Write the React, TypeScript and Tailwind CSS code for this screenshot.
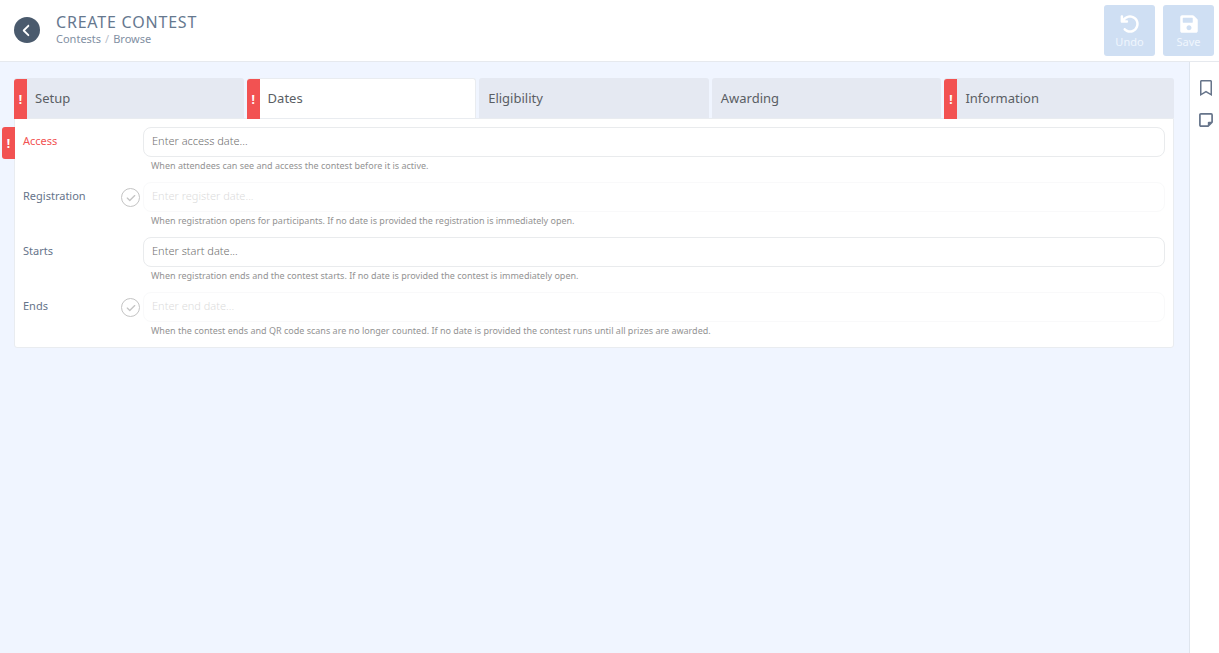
import { FaRegBookmark, FaSave } from "react-icons/fa";
import { FaAngleLeft, FaArrowRotateLeft, FaCheck } from "react-icons/fa6";

type Tab = { label: string; invalid?: boolean; active?: boolean };

type Field = {
  id: string;
  label: string;
  placeholder: string;
  help: string;
  optional?: boolean;
  invalid?: boolean;
};

const tabs: Tab[] = [
  { label: "Setup", invalid: true },
  { label: "Dates", invalid: true, active: true },
  { label: "Eligibility" },
  { label: "Awarding" },
  { label: "Information", invalid: true },
];

const fields: Field[] = [
  {
    id: "access",
    label: "Access",
    placeholder: "Enter access date...",
    help: "When attendees can see and access the contest before it is active.",
    invalid: true,
  },
  {
    id: "register",
    label: "Registration",
    placeholder: "Enter register date...",
    help: "When registration opens for participants. If no date is provided the registration is immediately open.",
    optional: true,
  },
  {
    id: "start",
    label: "Starts",
    placeholder: "Enter start date...",
    help: "When registration ends and the contest starts. If no date is provided the contest is immediately open.",
  },
  {
    id: "end",
    label: "Ends",
    placeholder: "Enter end date...",
    help: "When the contest ends and QR code scans are no longer counted. If no date is provided the contest runs until all prizes are awarded.",
    optional: true,
  },
];

function NoteIcon() {
  return (
    <svg viewBox="0 0 16 16" className="size-4" fill="none" stroke="currentColor" strokeWidth="1.7">
      <path d="M2.9 1.9h10.2a1 1 0 0 1 1 1v7.2l-4 4H2.9a1 1 0 0 1-1-1V2.9a1 1 0 0 1 1-1z" strokeLinejoin="round" />
      <path d="M14.2 9.8h-3.4a1 1 0 0 0-1 1v3.4z" fill="currentColor" stroke="none" />
    </svg>
  );
}

function Header() {
  return (
    <header className="flex items-start justify-between border-b border-[#e6e9ee] bg-white pt-[5px] pr-[5px] pb-[5px] pl-[14px]">
      <div className="flex items-center gap-4 pt-2">
        <button
          type="button"
          aria-label="Back"
          className="flex size-[26px] items-center justify-center rounded-full bg-[#4a5a6d] pr-px text-white"
        >
          <FaAngleLeft className="size-[15px]" />
        </button>
        <div>
          <h1 className="text-base leading-[18px] tracking-wider text-[#66788f]">CREATE CONTEST</h1>
          <nav className="flex gap-1 text-[11px] leading-4 text-[#8290a3]">
            <a href="#contests">Contests</a>
            <span className="text-[#b9c0ca]">/</span>
            <a href="#browse">Browse</a>
          </nav>
        </div>
      </div>
      <div className="flex gap-2">
        <ActionButton label="Undo">
          <FaArrowRotateLeft className="size-5" />
        </ActionButton>
        <ActionButton label="Save">
          <FaSave className="size-5" />
        </ActionButton>
      </div>
    </header>
  );
}

function ActionButton({ label, children }: { label: string; children: React.ReactNode }) {
  return (
    <button
      type="button"
      disabled
      className="flex size-[51px] flex-col items-center justify-center rounded-[3px] bg-[#cfdff3] pt-[3px] text-white"
    >
      {children}
      <span className="text-[11px] leading-4 text-[#f0f6fd]">{label}</span>
    </button>
  );
}

function TabButton({ label, invalid, active }: Tab) {
  return (
    <button
      type="button"
      role="tab"
      aria-selected={!!active}
      className={`flex h-10 items-stretch rounded-t-[3px] border-t text-left text-[13px] text-[#5a5e64] ${
        active ? "border-r border-[#e9ecf0] bg-white" : "border-[#e5e9f2] bg-[#e5e9f2]"
      }`}
    >
      {invalid && (
        <span className="-mb-px flex w-[13px] items-center justify-center rounded-tl-[3px] bg-[#f25252] pt-0.5 text-xs font-bold text-white">
          !
        </span>
      )}
      <span className={`self-center ${invalid ? "pl-2" : "pl-[9px]"}`}>{label}</span>
    </button>
  );
}

function FieldRow({ id, label, placeholder, help, optional, invalid }: Field) {
  return (
    <div className="relative flex h-[55px] items-start pr-2 pl-2">
      {invalid && (
        <span className="absolute top-0 -left-[13px] flex h-8 w-[13px] items-center justify-center rounded-l-[3px] bg-[#f25252] pt-0.5 text-xs font-bold text-white">
          !
        </span>
      )}
      <label
        htmlFor={id}
        className={`w-[98px] pt-[6px] text-[11px] leading-4 ${invalid ? "text-[#f25252]" : "text-[#66748a]"}`}
      >
        {label}
      </label>
      <div className="w-[22px] pt-[6px]">
        {optional && (
          <button
            type="button"
            aria-label={`Set ${label}`}
            className="flex size-[19px] items-center justify-center rounded-full border border-[#c4c4c4] text-[#c4c4c4]"
          >
            <FaCheck className="size-[10px]" />
          </button>
        )}
      </div>
      <div className="flex-1">
        <input
          id={id}
          type="text"
          disabled={optional}
          placeholder={placeholder}
          className={`block h-[30px] w-full rounded-lg border border-[#e9ebed] bg-white px-2 pb-1 text-[11px] font-light placeholder:text-[#6f6f6f] ${
            optional ? "opacity-25" : ""
          }`}
        />
        <p className="pt-px pl-2 text-[9px] leading-4 text-[#939393]">{help}</p>
      </div>
    </div>
  );
}

export default function App() {
  return (
    <div className="flex min-h-screen flex-col bg-[#f0f5ff] font-['Noto_Sans',sans-serif]">
      <Header />
      <div className="flex flex-1">
        <main className="min-w-0 flex-1 pt-4 pr-[15px] pl-[14px]">
          <div role="tablist" className="relative z-10 grid grid-cols-5 gap-[3px]">
            {tabs.map((tab) => (
              <TabButton key={tab.label} {...tab} />
            ))}
          </div>
          <form className="rounded-b-[3px] border border-[#e9ecf0] bg-white pt-2">
            {fields.map((field) => (
              <FieldRow key={field.id} {...field} />
            ))}
          </form>
        </main>
        <aside className="flex w-[30px] flex-col items-center gap-4 border-l border-[#dfe5ee] bg-white pt-[18px] pl-[3px] text-[#66748a]">
          <button type="button" aria-label="Bookmark">
            <FaRegBookmark className="size-4" />
          </button>
          <button type="button" aria-label="Notes">
            <NoteIcon />
          </button>
        </aside>
      </div>
    </div>
  );
}
